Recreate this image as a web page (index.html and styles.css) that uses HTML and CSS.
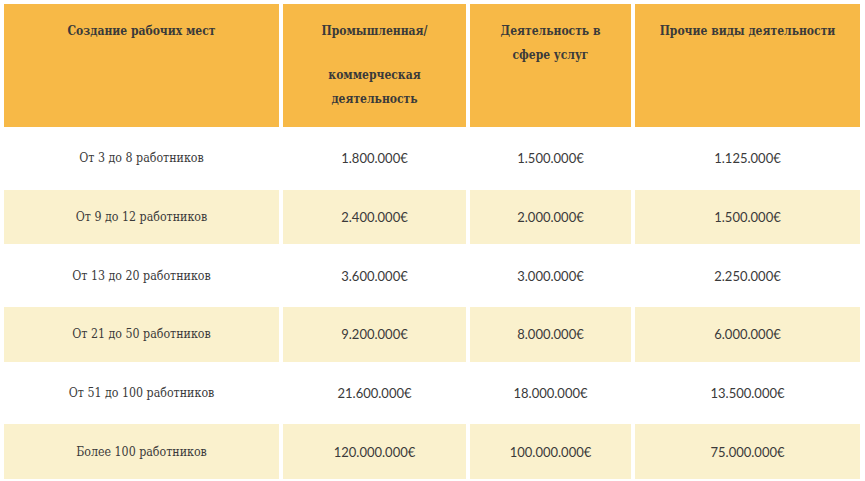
FILE: index.html
```html
<!DOCTYPE html>
<html lang="ru">
<head>
<meta charset="utf-8">
<link rel="stylesheet" href="styles.css">
</head>
<body>
<table class="grants">
  <colgroup>
    <col class="c1"><col class="c2"><col class="c3"><col class="c4">
  </colgroup>
  <thead>
    <tr class="head">
      <th>Создание рабочих мест</th>
      <th>Промышленная/<span class="gap"></span>коммерческая<br>деятельность</th>
      <th>Деятельность в<br>сфере услуг</th>
      <th>Прочие виды деятельности</th>
    </tr>
  </thead>
  <tbody>
    <tr class="r a"><td class="lab">От 3 до 8 работников</td><td class="num">1.800.000€</td><td class="num">1.500.000€</td><td class="num">1.125.000€</td></tr>
    <tr class="r b"><td class="lab">От 9 до 12 работников</td><td class="num">2.400.000€</td><td class="num">2.000.000€</td><td class="num">1.500.000€</td></tr>
    <tr class="r a"><td class="lab">От 13 до 20 работников</td><td class="num">3.600.000€</td><td class="num">3.000.000€</td><td class="num">2.250.000€</td></tr>
    <tr class="r b"><td class="lab">От 21 до 50 работников</td><td class="num">9.200.000€</td><td class="num">8.000.000€</td><td class="num">6.000.000€</td></tr>
    <tr class="r a"><td class="lab">От 51 до 100 работников</td><td class="num">21.600.000€</td><td class="num">18.000.000€</td><td class="num">13.500.000€</td></tr>
    <tr class="r b"><td class="lab">Более 100 работников</td><td class="num">120.000.000€</td><td class="num">100.000.000€</td><td class="num">75.000.000€</td></tr>
  </tbody>
</table>
</body>
</html>
```
FILE: styles.css
```css
html, body {
  margin: 0;
  padding: 0;
  background: #ffffff;
}
.grants {
  border-collapse: separate;
  border-spacing: 4px;
  table-layout: fixed;
  width: 864px;
  color: #3a3a3a;
}
.c1 { width: 275px; }
.c2 { width: 183px; }
.c3 { width: 161px; }
.c4 { width: 225px; }
.grants th, .grants td {
  padding: 0;
  text-align: center;
}
.head th {
  height: 123px;
  box-sizing: border-box;
  padding-top: 15px;
  vertical-align: top;
  background: #f7b947;
  font-family: "DejaVu Serif Condensed", "DejaVu Serif", serif;
  font-weight: bold;
  font-size: 12px;
  line-height: 24px;
}
.gap {
  display: block;
  height: 20px;
}
.r td {
  height: 54.7px;
  vertical-align: middle;
}
.r.b td {
  background: #faf1cd;
}
.lab {
  font-family: "DejaVu Serif Condensed", "DejaVu Serif", serif;
  font-size: 12.3px;
}
.num {
  font-family: Lato, "Open Sans", sans-serif;
  font-size: 13px;
}
```
